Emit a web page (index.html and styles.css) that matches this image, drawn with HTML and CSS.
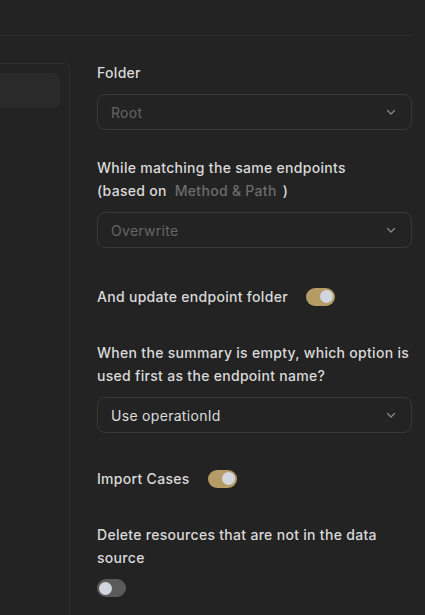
FILE: index.html
```html
<!DOCTYPE html>
<html lang="en">

<head>
    <meta charset="UTF-8">
    <meta name="viewport" content="width=device-width, initial-scale=1.0">
    <title>Import Settings</title>
    <link rel="stylesheet" href="styles.css">
</head>

<body>
    <div class="topbar"></div>
    <div class="layout">
        <div class="sidebar">
            <div class="side-item"></div>
        </div>
        <div class="form">
            <div class="field">
                <label class="label">Folder</label>
                <div class="select placeholder">
                    <span>Root</span>
                    <svg class="chevron" width="12" height="12" viewBox="0 0 12 12"><path d="M2.5 4.5 6 8l3.5-3.5" fill="none" stroke="currentColor" stroke-width="1.2" stroke-linecap="round" stroke-linejoin="round"/></svg>
                </div>
            </div>
            <div class="field">
                <label class="label">While matching the same endpoints<br>(based on <span class="muted">Method &amp; Path</span> )</label>
                <div class="select placeholder">
                    <span>Overwrite</span>
                    <svg class="chevron" width="12" height="12" viewBox="0 0 12 12"><path d="M2.5 4.5 6 8l3.5-3.5" fill="none" stroke="currentColor" stroke-width="1.2" stroke-linecap="round" stroke-linejoin="round"/></svg>
                </div>
            </div>
            <div class="field inline first-inline">
                <label class="label">And update endpoint folder</label>
                <span class="switch on"><span class="knob"></span></span>
            </div>
            <div class="field">
                <label class="label">When the summary is empty, which option is used first as the endpoint name?</label>
                <div class="select">
                    <span>Use operationId</span>
                    <svg class="chevron" width="12" height="12" viewBox="0 0 12 12"><path d="M2.5 4.5 6 8l3.5-3.5" fill="none" stroke="currentColor" stroke-width="1.2" stroke-linecap="round" stroke-linejoin="round"/></svg>
                </div>
            </div>
            <div class="field inline">
                <label class="label">Import Cases</label>
                <span class="switch on"><span class="knob"></span></span>
            </div>
            <div class="field">
                <label class="label">Delete resources that are not in the data source</label>
                <span class="switch"><span class="knob"></span></span>
            </div>
        </div>
    </div>
</body>
</html>
```

FILE: styles.css
```css
body {
    font-family: Inter, "Noto Sans", sans-serif;
    margin: 0;
    padding: 0;
    background-color: #232323;
    color: #dcdcdc;
    font-size: 14px;
    letter-spacing: 0.3px;
    overflow: hidden;
    height: 615px;
}
.topbar {
    height: 35px;
    width: 412px;
    border-bottom: 1px solid #2f2f2f;
}
.layout {
    display: grid;
    grid-template-columns: 70px 315px;
    column-gap: 27px;
    padding-top: 25px;
}
.sidebar {
    height: 600px;
    border-top: 1px solid #2e2e2e;
    border-right: 1px solid #2e2e2e;
    border-top-right-radius: 6px;
    padding: 9px 9px 0 0;
    margin-top: 2px;
}
.side-item {
    height: 35px;
    background: #2a2a2a;
    border-radius: 0 7px 7px 0;
}
.field {
    margin-bottom: 26px;
}
.label {
    display: block;
    font-weight: 500;
    line-height: 23px;
    color: #dadada;
    margin-bottom: 10px;
}
.muted {
    color: #6c6c6c;
    padding: 0 2px 0 4px;
}
.select {
    height: 34px;
    border: 1px solid #383838;
    border-radius: 8px;
    display: flex;
    align-items: center;
    justify-content: space-between;
    padding: 0 14px 0 13px;
    color: #dcdcdc;
}
.select.placeholder {
    color: #666;
}
.chevron {
    color: #8a8a8a;
}
.field.inline {
    display: flex;
    align-items: center;
    gap: 18px;
    padding-top: 8px;
    margin-bottom: 33px;
}
.field.first-inline {
    padding-top: 11px;
}
.field.inline .label {
    margin-bottom: 0;
}
.switch {
    display: inline-flex;
    align-items: center;
    width: 29px;
    height: 18px;
    border-radius: 9px;
    background: #5a5a5a;
    padding: 0 2px;
    box-sizing: border-box;
}
.switch.on {
    background: #b59b65;
    justify-content: flex-end;
}
.knob {
    width: 13px;
    height: 13px;
    border-radius: 50%;
    background: #d2d7df;
}
```
